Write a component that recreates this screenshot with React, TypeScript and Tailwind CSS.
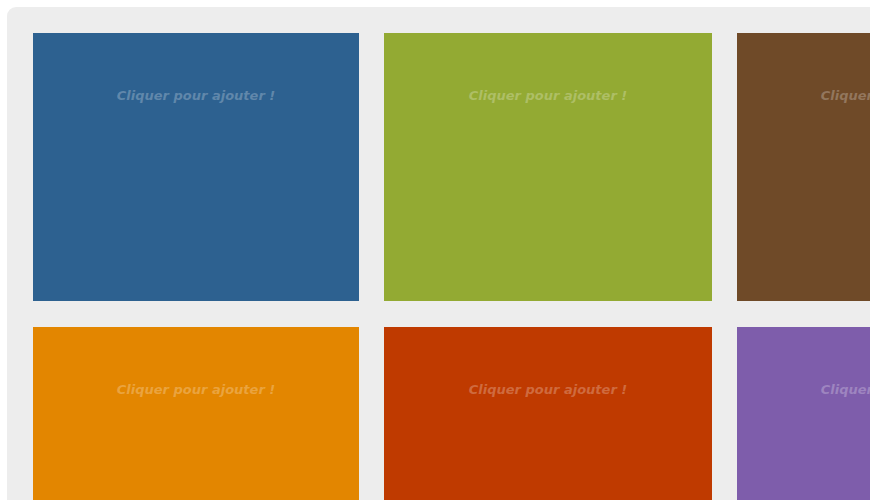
const tiles = [
  { bg: 'bg-[#2d6190]' },
  { bg: 'bg-[#93aa33]' },
  { bg: 'bg-[#6f4a28]' },
  { bg: 'bg-[#e38600]' },
  { bg: 'bg-[#bf3a00]' },
  { bg: 'bg-[#7e5dab]' },
];

function Tile({ bg }: { bg: string }) {
  return (
    <div className={`${bg} h-[268px] flex justify-center pt-[55px]`}>
      <span className="text-[13px] leading-4 font-bold italic text-white/25 [font-family:'DejaVu_Sans',sans-serif] h-4 whitespace-nowrap">
        Cliquer pour ajouter !
      </span>
    </div>
  );
}

export default function App() {
  return (
    <div className="w-[870px] h-[500px] overflow-hidden bg-white pt-[7px] pl-[7px]">
      <div className="w-[1200px] h-[700px] bg-[#ededed] rounded-[9px] p-[26px]">
        <div className="grid grid-cols-[326px_328px_326px] gap-x-[25px] gap-y-[26px]">
          {tiles.map((t, i) => (
            <Tile key={i} bg={t.bg} />
          ))}
        </div>
      </div>
    </div>
  );
}
